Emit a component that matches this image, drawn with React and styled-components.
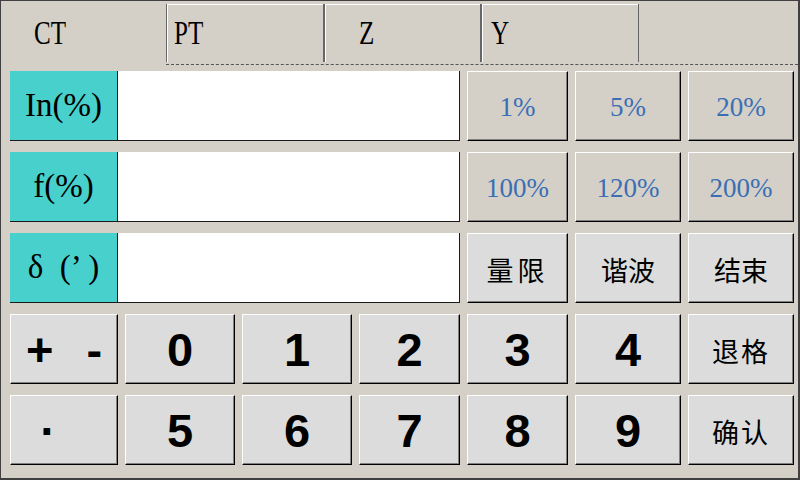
import styled, { createGlobalStyle } from "styled-components";

const Global = createGlobalStyle`
  body {
    margin: 0;
    background: #d4d0c8;
  }
`

const Frame = styled.div`
  width: 800px;
  height: 480px;
  box-sizing: border-box;
  background: #d4d0c8;
  border-style: solid;
  border-color: #404040;
  border-width: 1px 2px 2px 1px;
  overflow: hidden;
`

const TabBar = styled.div`
  display: flex;
  height: 64px;
`

const CurrentTab = styled.div`
  width: 165px;
  display: flex;
  align-items: center;
  padding-left: 33px;
  box-sizing: border-box;
`

const TabStrip = styled.div`
  flex: 1;
  display: flex;
  align-items: flex-start;
  padding-top: 3px;
  box-sizing: border-box;
  border-bottom: 1px dashed #555;
`

const Tab = styled.div`
  width: ${p => p.$w}px;
  height: 58px;
  box-sizing: border-box;
  display: flex;
  align-items: center;
  padding-left: ${p => p.$indent}px;
  border-left: 1px solid #666;
  border-right: 1px solid #666;
  box-shadow: inset 1px 1px 0 #fff;
`

const TabText = styled.span`
  display: inline-block;
  font-family: "Liberation Serif", serif;
  font-size: 33px;
  line-height: 1;
  color: #000;
  transform: scaleX(0.76);
  transform-origin: left center;
`

const Pad = styled.div`
  display: grid;
  grid-template-columns: 108px 110px 110px 101px 101px 106px 106px;
  grid-auto-rows: 70px;
  gap: 11px 7px;
  padding: 6px 0 0 9px;
`

const Field = styled.div`
  grid-column: 1 / span 4;
  display: flex;
  border-bottom: 1px solid #1a1a1a;
`

const FieldLabel = styled.div`
  width: 108px;
  box-sizing: border-box;
  background: #48d1cc;
  border-right: 1px solid #1a1a1a;
  display: flex;
  align-items: center;
  justify-content: center;
  font-family: "Liberation Serif", serif;
  font-size: 33px;
  color: #000;
  white-space: pre;
`

const FieldInput = styled.div`
  flex: 1;
  background: #fff;
  border-right: 1px solid #1a1a1a;
`

const Key = styled.div`
  box-sizing: border-box;
  display: flex;
  align-items: center;
  justify-content: center;
  background: ${p => (p.$flat ? "#d4d0c8" : "#dcdcdc")};
  border: 1px solid;
  border-color: #fff #000 #000 #fff;
  box-shadow: inset -1px -1px 0 #808080;
  color: #000;
  white-space: pre;
`

const PctKey = styled(Key)`
  font-family: "Liberation Serif", serif;
  font-size: 27px;
  color: #3b6fb4;
  padding-top: 3px;
`

const DigitKey = styled(Key)`
  font-family: "Liberation Sans", Arial, sans-serif;
  font-weight: bold;
  font-size: 47px;
  word-spacing: 20px;
  padding-right: ${p => p.$shift || 0}px;
`

const WordKey = styled(Key)`
  font-family: "Noto Sans CJK SC", sans-serif;
  font-size: 27px;
  letter-spacing: ${p => p.$spread || 0}px;
  padding-top: 2px;
`

const fields = [
  { label: "In(%)", keys: ["1%", "5%", "20%"] },
  { label: "f(%)", keys: ["100%", "120%", "200%"] },
]

export default function App() {
  return (
    <Frame>
      <Global />
      <TabBar>
        <CurrentTab><TabText>CT</TabText></CurrentTab>
        <TabStrip>
          <Tab $w={158} $indent={7}><TabText>PT</TabText></Tab>
          <Tab $w={157} $indent={34}><TabText>Z</TabText></Tab>
          <Tab $w={158} $indent={9}><TabText>Y</TabText></Tab>
        </TabStrip>
      </TabBar>
      <Pad>
        {fields.map(f => (
          <>
            <Field key={f.label}>
              <FieldLabel>{f.label}</FieldLabel>
              <FieldInput />
            </Field>
            {f.keys.map(k => <PctKey $flat key={k}>{k}</PctKey>)}
          </>
        ))}
        <Field>
          <FieldLabel>{"δ\u00a0\u00a0(’\u2009)"}</FieldLabel>
          <FieldInput />
        </Field>
        <WordKey $spread={4}>量限</WordKey>
        <WordKey>谐波</WordKey>
        <WordKey>结束</WordKey>

        <DigitKey>+ -</DigitKey>
        {["0", "1", "2", "3", "4"].map(d => <DigitKey key={d}>{d}</DigitKey>)}
        <WordKey $spread={2}>退格</WordKey>

        <DigitKey $shift={32}>·</DigitKey>
        {["5", "6", "7", "8", "9"].map(d => <DigitKey key={d}>{d}</DigitKey>)}
        <WordKey $spread={2}>确认</WordKey>
      </Pad>
    </Frame>
  );
}
